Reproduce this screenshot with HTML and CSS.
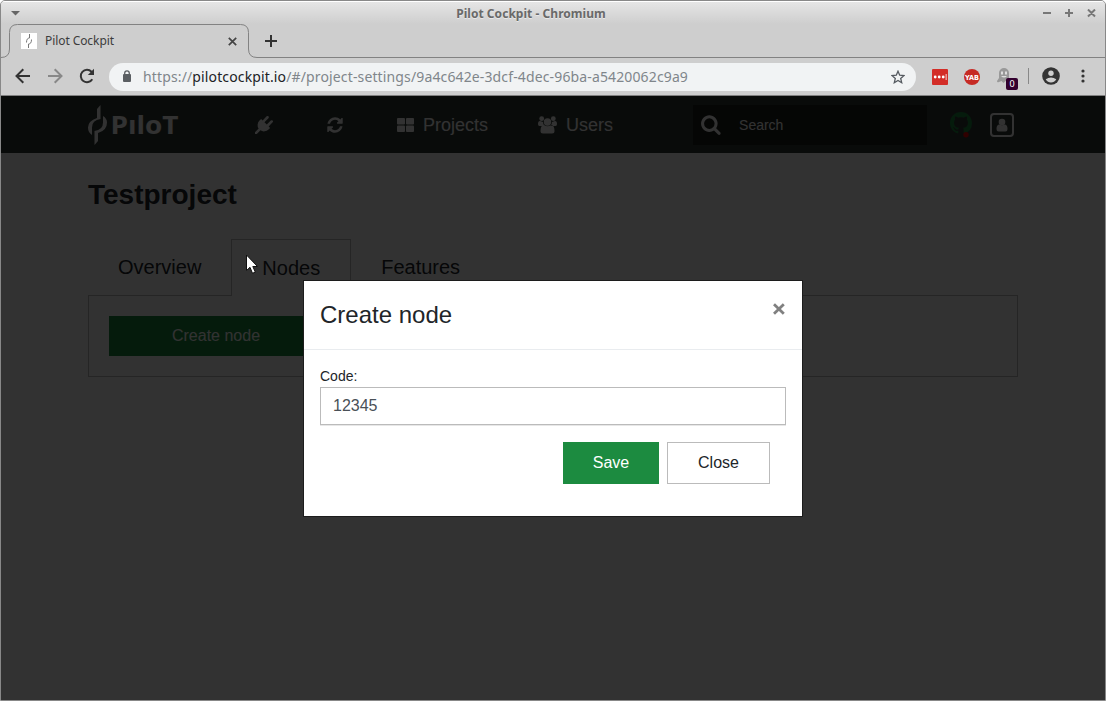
FILE: index.html
```html
<!DOCTYPE html>
<html lang="en">
<head>
<meta charset="utf-8">
<title>Pilot Cockpit</title>
<link rel="stylesheet" href="styles.css">
</head>
<body>
<div class="window">
  <header class="titlebar">
    <svg class="win-menu" width="10" height="6" viewBox="0 0 10 6"><path d="M0 0h9L4.500 4.500z" fill="#666"/></svg>
    <span class="window-title">Pilot Cockpit - Chromium</span>
    <svg class="win-controls" width="54" height="10" viewBox="0 0 54 10" fill="none" stroke="#777" stroke-width="2"><path d="M1 4h8M23 4h8M27 0v8M46 .5l7 7M53 .5l-7 7"/></svg>
  </header>
  <div class="tabstrip">
    <svg class="tab-outline" width="1104" height="34" viewBox="0 0 1104 34" fill="none" stroke="#828282"><path d="M0 33.500q8.500 0 8.500-8.500V8.500q0-8 8-8h223q8 0 8 8V25q0 8.500 8.500 8.500h848"/></svg>
    <svg class="favicon" width="16" height="16" viewBox="0 0 16 16"><path fill="#fff" d="M0 0h16v16H0z"/><path d="M8.500 1v4q-3 0-3 4.500M7.500 15v-4q3 0 3-4.500" fill="none" stroke="#777"/></svg>
    <span class="tab-title">Pilot Cockpit</span>
    <svg class="tab-close" width="9" height="9" viewBox="0 0 9 9"><path d="M.8.8l7.400 7.400M8.200.8L.8 8.200" stroke="#444" stroke-width="1.700"/></svg>
    <svg class="tab-new" width="12" height="12" viewBox="0 0 12 12"><path d="M6 0v12M0 6h12" stroke="#333" stroke-width="2"/></svg>
  </div>
  <div class="toolbar">
    <svg class="back" width="16" height="16" viewBox="0 0 16 16" fill="none" stroke="#333" stroke-width="2"><path d="M15 8H2M8.300 1.200L1.500 8l6.800 6.800"/></svg>
    <svg class="forward" width="16" height="16" viewBox="0 0 16 16" fill="none" stroke="#888" stroke-width="2"><path d="M1 8h13M7.700 1.200L14.500 8l-6.800 6.800"/></svg>
    <svg class="reload" width="16" height="16" viewBox="0 0 16 16"><path d="M13.300 11.200A6.200 6.200 0 1 1 12.500 3.700L14 5.200" fill="none" stroke="#333" stroke-width="2"/><path d="M15 .8v6.200H8.800z" fill="#333"/></svg>
    <div class="address">
      <svg width="10" height="13" viewBox="0 0 10 13"><rect y="4" width="8" height="8" rx="1" fill="#5a5e62"/><path d="M1.700 5V3.200a2.300 2.300 0 0 1 4.600 0V5" fill="none" stroke="#5a5e62" stroke-width="1.300"/></svg>
      <span class="url">https://<b>pilotcockpit.io</b>/#/project-settings/9a4c642e-3dcf-4dec-96ba-a5420062c9a9</span>
      <svg class="star" width="14" height="14" viewBox="0 0 14 14"><path d="M7 1.200l1.700 4 4.300.4-3.300 2.800 1 4.300L7 10.500l-3.700 2.200 1-4.300L1 5.600l4.300-.4z" fill="none" stroke="#555a60" stroke-width="1.300"/></svg>
    </div>
    <svg class="ext" width="16" height="16" viewBox="0 0 16 16"><rect width="16" height="16" rx="1" fill="#d32d27"/><g fill="#fff"><circle cx="3.200" cy="8" r="1.400"/><circle cx="7.200" cy="8" r="1.400"/><circle cx="11.200" cy="8" r="1.400"/><path d="M13.700 5h.8v6h-.8z"/></g></svg>
    <svg class="ext" width="16" height="16" viewBox="0 0 16 16"><circle cx="8" cy="8" r="8" fill="#c62a24"/><text x="1" y="10.500" font-size="7" font-weight="700" textLength="14" lengthAdjust="spacingAndGlyphs" fill="#fff" font-family="DejaVu Sans, sans-serif">YAB</text></svg>
    <div class="ghost">
      <svg width="14" height="15" viewBox="0 0 14 15"><path d="M2 14q-2 1-2-1l2-3V5a5 5 0 0 1 10 0v5l1.500 3-3 1-2-1-2 2-2-2z" fill="#999"/><path d="M4 3.500h2v3H4zM8 3.500h2v3H8zM4 8q3 3 6 0z" fill="#ddd"/></svg>
      <span class="badge">0</span>
    </div>
    <i class="separator"></i>
    <svg class="profile" width="18" height="18" viewBox="0 0 18 18"><circle cx="9" cy="9" r="8.800" fill="#333"/><circle cx="9" cy="6.200" r="2.700" fill="#cecece"/><path d="M3.700 12.300q5.300-3.700 10.600 0Q12.300 15.500 9 15.500t-5.300-3.200z" fill="#cecece"/></svg>
    <svg class="more" width="4" height="14" viewBox="0 0 4 14" fill="#333"><circle cx="2" cy="2" r="1.600"/><circle cx="2" cy="7" r="1.600"/><circle cx="2" cy="12" r="1.600"/></svg>
  </div>

  <main class="page">
    <nav class="navbar">
      <svg class="logo" width="94" height="42" viewBox="0 0 94 42" fill="#fff">
        <path d="M12.500 1v14Q4 16 4 23.500V31Q0 28.500 0 23.500 0 17 9 14V5zM6.500 41V27Q15 26 15 18.500V12q4 2.500 4 6.500 0 8-9 10.500V37z"/>
        <text x="22.500" y="29.500" font-family="Open Sans, sans-serif" font-size="24.500" font-weight="700" textLength="68" lengthAdjust="spacingAndGlyphs">PıloT</text>
      </svg>
      <svg class="plug" width="18" height="18" viewBox="0 0 1792 1792" fill="#fff"><path d="M1755 453q37 38 37 90.500t-37 90.500l-401 400 150 150-160 160q-163 163-389.500 186.500t-411.500-100.500l-362 362h-181v-181l362-362q-124-185-100.500-411.500t186.500-389.500l160-160 150 150 400-401q38-37 91-37t90 37 37 90.500-37 90.500l-400 401 234 234 401-400q38-37 91-37t90 37z"/></svg>
      <svg class="refresh" width="18" height="18" viewBox="0 0 1792 1792" fill="#fff"><path d="M1639 1056q0 5-1 7-64 268-268 434.500t-478 166.500q-146 0-282.500-55t-243.500-157l-129 129q-19 19-45 19t-45-19-19-45v-448q0-26 19-45t45-19h448q26 0 45 19t19 45-19 45l-137 137q71 66 161 102t187 36q134 0 250-65t186-179q11-17 53-117 8-23 30-23h192q13 0 22.500 9.500t9.500 22.500zm25-800v448q0 26-19 45t-45 19h-448q-26 0-45-19t-19-45 19-45l138-138q-148-137-349-137-134 0-250 65t-186 179q-11 17-53 117-8 23-30 23h-199q-13 0-22.500-9.500t-9.500-22.500v-7q65-268 270-434.500t480-166.500q146 0 284 55.500t245 156.500l130-129q19-19 45-19t45 19 19 45z"/></svg>
      <a class="nav-link projects"><svg width="17" height="14" viewBox="0 0 17 14" fill="#fff"><rect width="8" height="6.500" rx="1"/><rect x="9" width="8" height="6.500" rx="1"/><rect y="7.500" width="8" height="6.500" rx="1"/><rect x="9" y="7.500" width="8" height="6.500" rx="1"/></svg><span>Projects</span></a>
      <a class="nav-link users"><svg width="19" height="18" viewBox="0 0 19 18" fill="#fff"><circle cx="3.700" cy="2.700" r="2.400"/><circle cx="15.300" cy="2.700" r="2.400"/><circle cx="9.500" cy="6" r="3.700"/><path d="M0 8q0-3 2-3l3 1q0 2 1.500 4h-5Q0 10 0 8zM19 8q0-3-2-3l-3 1q0 2-1.500 4h5q1.500 0 1.500-2zM2.500 15q0-6 3.500-6 3.500 2.500 7 0 3.500 0 3.500 6 0 2.500-2.500 2.500H5q-2.500 0-2.500-2.500z"/></svg><span>Users</span></a>
      <div class="search"><svg width="20" height="20" viewBox="60 100 1700 1700" fill="#fff"><path d="M1216 832q0-185-131.500-316.500t-316.500-131.500-316.500 131.500-131.500 316.500 131.500 316.500 316.500 131.500 316.500-131.500 131.500-316.500zm512 832q0 52-38 90t-90 38q-54 0-90-38l-343-342q-179 124-399 124-143 0-273.500-55.500t-225-150-150-225-55.500-273.500 55.500-273.500 150-225 225-150 273.500-55.500 273.500 55.500 225 150 150 225 55.500 273.500q0 220-124 399l343 343q37 37 37 90z"/></svg><span>Search</span></div>
      <svg class="github" width="22" height="26" viewBox="0 0 22 26"><path transform="scale(1.370)" fill="#1c8b40" d="M8 0C3.580 0 0 3.580 0 8c0 3.540 2.290 6.530 5.470 7.590.4.070.55-.17.55-.38 0-.19-.01-.82-.01-1.490-2.010.37-2.530-.49-2.690-.94-.09-.23-.48-.94-.82-1.130-.28-.15-.68-.52-.01-.53.63-.01 1.080.58 1.230.82.72 1.210 1.870.87 2.330.66.070-.52.28-.87.51-1.070-1.780-.2-3.640-.89-3.640-3.950 0-.87.31-1.590.82-2.150-.08-.2-.36-1.020.08-2.120 0 0 .67-.21 2.200.82.64-.18 1.320-.27 2-.27s1.360.09 2 .27c1.530-1.040 2.200-.82 2.200-.82.44 1.100.16 1.920.08 2.120.51.56.82 1.270.82 2.150 0 3.070-1.870 3.750-3.650 3.950.29.25.54.73.54 1.480 0 1.070-.01 1.930-.01 2.200 0 .21.15.46.55.38A8.010 8.010 0 0 0 16 8c0-4.420-3.580-8-8-8z"/><circle cx="16" cy="22.800" r="2.700" fill="#e00"/></svg>
      <svg class="account" width="24" height="24" viewBox="0 0 24 24" fill="#fff"><rect x="1" y="1" width="22" height="22" rx="3" fill="none" stroke="#fff" stroke-width="2"/><circle cx="12" cy="9" r="3.300"/><path d="M6.500 16q0-4.500 3-4.500 2.500 1.500 5 0 3 0 3 4.500 0 2.500-2 2.500h-7q-2 0-2-2.500z"/></svg>
    </nav>
    <section class="content">
      <h1>Testproject</h1>
      <div class="tabs">
        <a class="tab">Overview</a>
        <a class="tab active">Nodes</a>
        <a class="tab">Features</a>
      </div>
      <div class="panel"><a class="create">Create node</a></div>
    </section>
    <div class="backdrop">
      <div class="modal">
        <div class="modal-header">
          <h2>Create node</h2>
          <svg width="14" height="14" viewBox="0 0 14 14"><path d="M2 2.200l9.800 9.600M11.800 2.200L2 11.800" stroke="#808080" stroke-width="2.800"/></svg>
        </div>
        <div class="modal-body">
          <label for="code">Code:</label>
          <input id="code" type="text" value="12345">
          <div class="actions">
            <button class="save">Save</button>
            <button class="close">Close</button>
          </div>
        </div>
      </div>
    </div>
  </main>
  <svg class="cursor" width="14" height="22" viewBox="0 0 14 22"><path d="M1.500 1v15.500l3.500-3.200 2.500 6 2.800-1.200-2.500-5.600h4.700z" fill="#fff" stroke="#111"/></svg>
</div>
</body>
</html>
```
FILE: styles.css
```css
* { box-sizing: border-box; }
body { margin: 0; background: #fff; font-family: "Liberation Sans", Arial, sans-serif; }
svg { display: block; flex: none; }
.window { position: relative; width: 1106px; height: 701px; border: 1px solid #888; border-radius: 5px 5px 0 0; overflow: hidden; display: flex; flex-direction: column; background: #cecece; }

.titlebar { height: 23px; flex: none; display: grid; grid-template-columns: 54px 1fr 54px; align-items: center; padding: 1px 9px 0 10px; border-top: 1px solid #fff; background: linear-gradient(#e5e5e5, #cecece); }
.window-title { padding-right: 45px; text-align: center; font: 700 12px/20px "Noto Sans", sans-serif; letter-spacing: .04px; color: #696969; text-shadow: 0 1px #e8e8e8; }

.tabstrip { position: relative; height: 34px; flex: none; display: flex; align-items: center; padding-left: 20px; }
.tab-outline { position: absolute; left: 0; top: 0; }
.tab-title { width: 183px; margin-left: 8px; font: 12px/20px "Noto Sans", sans-serif; letter-spacing: -.08px; color: #3c3c3c; }
.tab-new { margin-left: 28px; }

.toolbar { height: 38px; flex: none; display: flex; align-items: center; padding: 0 0 1px 14px; border-bottom: 1px solid #808080; }
.forward, .reload { margin-left: 16px; }
.address { display: flex; align-items: center; width: 807px; height: 28px; margin: 1px 0 0 14px; padding: 0 11px 0 14px; border-radius: 14px; background: #f1f3f4; }
.url { flex: 1; margin-left: 10px; font: 14px/20px "Noto Sans", sans-serif; letter-spacing: .135px; color: #80868b; white-space: nowrap; }
.url b { font-weight: 400; color: #202124; }
.ext { margin: 1px 0 0 16px; }
.ghost { position: relative; width: 20px; height: 16px; margin-left: 17px; }
.badge { position: absolute; left: 9px; top: 10px; width: 12px; height: 12px; border-radius: 2px; background: #33002f; color: #fff; text-align: center; font: 9px/12px "Noto Sans", sans-serif; }
.separator { width: 1px; height: 16px; margin-left: 11px; background: #888; }
.profile { margin-left: 13px; }
.more { margin-left: 21px; }

.page { position: relative; flex: 1; background: #fff; }
.navbar { height: 57px; display: flex; align-items: center; padding-left: 87px; background: #323c37; color: #fff; }
.plug { margin-left: 73px; }
.refresh { margin-left: 53px; }
.nav-link { display: flex; align-items: center; gap: 9px; font-size: 18px; }
.nav-link span { padding-top: 2px; }
.projects { margin-left: 53px; }
.users { margin-left: 50px; }
.search { display: flex; align-items: center; gap: 18px; width: 234px; height: 40px; margin-left: 80px; padding-left: 8px; background: #1c1f1e; font-size: 14px; }
.github { margin-left: 23px; }
.account { margin-left: 18px; }

.content { width: 930px; margin-left: 87px; padding-top: 25px; color: #212529; }
h1 { margin: 0; font-size: 28px; line-height: 34px; color: #212529; }
.tabs { display: flex; align-items: flex-start; height: 57px; margin-top: 27px; font-size: 20px; line-height: 24px; }
.tab { padding: 16px 30px; }
.tab.active { position: relative; height: 57px; padding-top: 16px; border: 1px solid #bbb; border-bottom: 0; background: #fff; }
.panel { height: 82px; margin-top: -1px; padding: 20px; border: 1px solid #bbb; }
.create { display: block; width: 214px; height: 40px; background: #1c8b40; color: #fff; text-align: center; line-height: 39px; }

.backdrop { position: absolute; inset: 0; display: flex; justify-content: center; align-items: flex-start; padding-top: 184px; background: rgba(0, 0, 0, .805); }
.modal { width: 500px; height: 237px; border: 1px solid #1c1c1c; background: #fff; color: #212529; }
.modal-header { display: flex; justify-content: space-between; height: 69px; padding: 16px; border-bottom: 1px solid #e9ecef; }
.modal-header svg { margin-top: 5px; }
h2 { margin: 0; font-size: 24px; font-weight: 400; line-height: 36px; }
.modal-body { padding: 16px; }
label { display: block; font-size: 14px; line-height: 21px; }
input { display: block; width: 466px; height: 38px; padding: 0 12px; border: 1px solid #bbb; box-shadow: 0 1px #e7e7e7; background: #fff; color: #495057; font: 16px "Liberation Sans", Arial, sans-serif; }
.actions { display: flex; justify-content: flex-end; gap: 8px; padding: 17px 16px 0 0; }
button { height: 42px; padding: 0 0 1px; font: 16px "Liberation Sans", Arial, sans-serif; }
.save { width: 96px; border: 0; background: #1c8b40; color: #fff; }
.close { width: 103px; border: 1px solid #bbb; background: #fff; color: #212529; }
.cursor { position: absolute; left: 244px; top: 253px; }
```
